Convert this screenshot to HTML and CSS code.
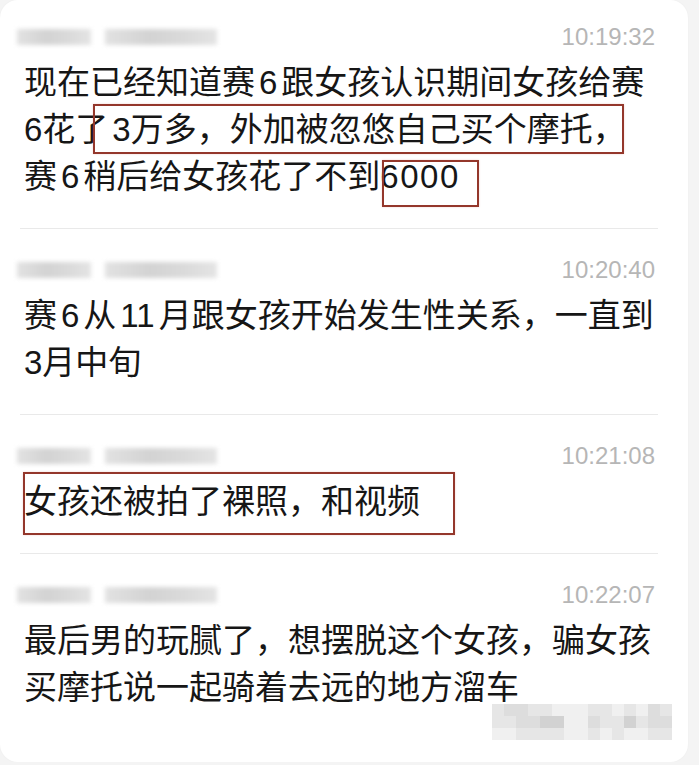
FILE: index.html
```html
<!DOCTYPE html>
<html>
<head>
    <meta charset="utf-8">
    <title>聊天记录</title>
    <link rel="stylesheet" href="styles.css">
</head>
<body>
    <div class="chat">
        <div class="msg">
            <div class="head">
                <div class="name"><i class="short"></i><i class="long"></i></div>
                <span class="time">10:19:32</span>
            </div>
            <p class="text">现在已经知道赛<span class="num">6</span>跟女孩认识期间女孩给赛<br>6花了<span class="hl hl-a"><span class="num lead">3</span>万多，外加被忽悠自己买个摩托，</span><br>赛<span class="num">6</span>稍后给女孩花了不到<span class="hl hl-b">6000</span></p>
        </div>

        <div class="msg">
            <div class="head">
                <div class="name"><i class="short"></i><i class="long"></i></div>
                <span class="time">10:20:40</span>
            </div>
            <p class="text">赛<span class="num">6</span>从<span class="num">11</span>月跟女孩开始发生性关系，一直到<br>3月中旬</p>
        </div>

        <div class="msg">
            <div class="head">
                <div class="name"><i class="short"></i><i class="long"></i></div>
                <span class="time">10:21:08</span>
            </div>
            <p class="text"><span class="hl hl-c">女孩还被拍了裸照，和视频</span></p>
        </div>

        <div class="msg last">
            <div class="head">
                <div class="name"><i class="short"></i><i class="long"></i></div>
                <span class="time">10:22:07</span>
            </div>
            <p class="text">最后男的玩腻了，想摆脱这个女孩，骗女孩<br>买摩托说一起骑着去远的地方溜车</p>
        </div>

        <!-- pixelated watermark -->
        <div class="mosaic">
            <span class="g1"></span><span class="g2"></span><span class="g2"></span><span class="g1"></span><span class="g1"></span><span class="g0"></span><span class="g0"></span><span class="g0"></span><span class="g1"></span><span class="g1"></span><span class="g0"></span><span class="g1"></span><span class="g0"></span><span class="g2"></span><span class="g1"></span>
            <span class="g1"></span><span class="g1"></span><span class="g2"></span><span class="g2"></span><span class="g3"></span><span class="g3"></span><span class="g0"></span><span class="g0"></span><span class="g2"></span><span class="g1"></span><span class="g1"></span><span class="g3"></span><span class="g1"></span><span class="g2"></span><span class="g2"></span>
            <span class="g0"></span><span class="g0"></span><span class="g1"></span><span class="g1"></span><span class="g1"></span><span class="g1"></span><span class="g0"></span><span class="g0"></span><span class="g1"></span><span class="g0"></span><span class="g1"></span><span class="g0"></span><span class="g0"></span><span class="g1"></span><span class="g1"></span>
        </div>
    </div>
</body>
</html>
```

FILE: styles.css
```css
body {
    margin: 0;
    background: #f4f4f4;
    font-family: "Liberation Sans", "Noto Sans CJK SC", sans-serif;
}

.chat {
    position: relative;
    width: 638px;
    height: 740px;
    padding: 22px 30px 0 20px;
    background: #fff;
    border-radius: 18px;
    box-shadow: 0 0 2px rgba(0, 0, 0, 0.04);
}

.msg {
    padding: 26px 0 28px;
    border-bottom: 1px solid #e9e9e9;
}

.msg:first-child {
    padding-top: 0;
}

.msg.last {
    border-bottom: none;
}

.head {
    display: flex;
    justify-content: space-between;
    align-items: center;
    height: 30px;
    padding-right: 3px;
}

/* blurred sender name */
.name {
    display: flex;
    gap: 14px;
    margin-left: -3px;
    filter: blur(2px);
}

.name i {
    display: block;
    height: 16px;
    background: linear-gradient(90deg, #e2e2e2, #d3d3d3 40%, #dadada 70%, #e4e4e4);
}

.name .short {
    width: 74px;
}

.name .long {
    width: 112px;
}

.time {
    font-size: 24px;
    color: #b6b6b6;
}

.text {
    margin: 7px 0 0;
    padding-left: 4px;
    font-size: 33px;
    line-height: 47px;
    color: #161616;
    white-space: nowrap;
}

.num {
    margin: 0 4px;
}

.num.lead {
    margin: 0 0 0 4px;
}

/* red annotation boxes */
.hl {
    position: relative;
}

.hl::after {
    content: "";
    position: absolute;
    border: 2px solid #94372b;
    box-shadow: 0 0 2px rgba(200, 80, 70, 0.25);
}

.hl-a::after {
    top: -7px;
    bottom: -6px;
    left: -15px;
    right: 2px;
}

.hl-b {
    letter-spacing: 1.5px;
}

.hl-b::after {
    top: 2px;
    bottom: -12px;
    left: 2px;
    right: -19px;
}

.hl-c::after {
    top: -11px;
    bottom: -15px;
    left: -1px;
    right: -35px;
}

.mosaic {
    position: absolute;
    right: 16px;
    bottom: 22px;
    display: grid;
    grid-template-columns: repeat(15, 12px);
    grid-auto-rows: 12px;
    filter: blur(0.6px);
}

.g0 { background: #f0f0f0; }
.g1 { background: #e6e6e6; }
.g2 { background: #dddddd; }
.g3 { background: #d2d2d2; }
```
